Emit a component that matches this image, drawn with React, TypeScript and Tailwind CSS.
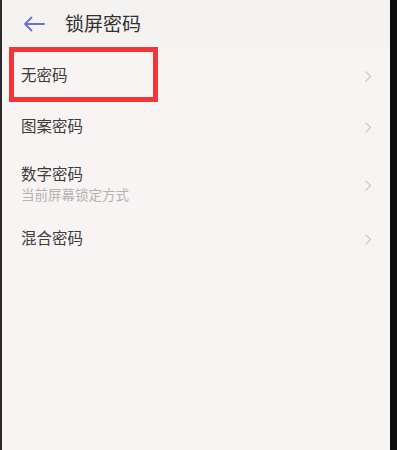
import React from "react";

const FONT = { fontFamily: '"Noto Sans CJK SC", "Noto Sans", sans-serif' };

function Chevron() {
  return (
    <svg width="8" height="13" viewBox="0 0 8 13" className="shrink-0 mt-[4px]">
      <path d="M1.5 1.5 L6.5 6.5 L1.5 11.5" fill="none" stroke="#cbc7c7" strokeWidth="1.2" />
    </svg>
  );
}

function Row({ title, sub, h }: { title: string; sub?: string; h: string }) {
  return (
    <div className={`flex items-center justify-between pl-[19px] pr-[18px] ${h}`}>
      <div className="flex flex-col">
        <span className="text-[15.5px] leading-[20px] text-[#3d3b3b]">{title}</span>
        {sub && <span className="text-[13.5px] leading-[20px] mt-[1px] text-[#b5b2b2]">{sub}</span>}
      </div>
      <Chevron />
    </div>
  );
}

export default function App() {
  return (
    <div className="flex h-[450px] w-full bg-[#f8f4f3]" style={FONT}>
      <div className="w-[2px] bg-[#2a2a2a]" />
      <div className="flex-1 flex flex-col">
        {/* header */}
        <div className="h-[47px] flex items-center bg-[#f5f2f2]">
          <svg width="22" height="16" viewBox="0 0 22 16" className="ml-[21px]">
            <path d="M21 8 H2 M8.5 1.5 L2 8 L8.5 14.5" fill="none" stroke="#6d72cf" strokeWidth="1.8" strokeLinecap="round" strokeLinejoin="round" />
          </svg>
          <span className="ml-[20px] text-[19px] text-[#333131]">锁屏密码</span>
        </div>

        {/* first row with red highlight */}
        <div className="h-[55px] flex items-center justify-between pr-[18px]">
          <div className="ml-[7px] w-[149px] h-[55px] border-[5px] border-[#f0353b] flex items-center pl-[7px]">
            <span className="text-[15.5px] text-[#3d3b3b]">无密码</span>
          </div>
          <Chevron />
        </div>

        <Row title="图案密码" h="h-[46px]" />
        <Row title="数字密码" sub="当前屏幕锁定方式" h="h-[70px]" />
        <Row title="混合密码" h="h-[38px]" />
      </div>
      <div className="w-[7px] bg-[#0c0c0c]" />
    </div>
  );
}
